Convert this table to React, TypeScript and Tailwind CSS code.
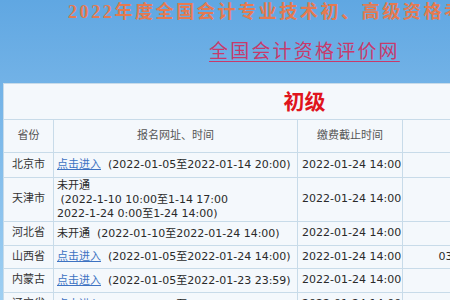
import React from 'react';

const cjk = '"DejaVu Sans", "Noto Sans CJK SC", sans-serif';

type Row = {
    province: string;
    open: boolean;
    lines: string[];
    deadline: string;
    phone?: string;
    h: string;
};

const rows: Row[] = [
    { province: '北京市', open: true, lines: ['\u00a0\u00a0(2022-01-05至2022-01-14 20:00)'], deadline: '2022-01-24 14:00', h: 'h-[25px]' },
    {
        province: '天津市',
        open: false,
        lines: ['未开通', '\u00a0(2022-1-10 10:00至1-14 17:00', '2022-1-24 0:00至1-24 14:00)'],
        deadline: '2022-01-24 14:00',
        h: 'h-[44px]'
    },
    { province: '河北省', open: false, lines: ['未开通\u00a0\u00a0(2022-01-10至2022-01-24 14:00)'], deadline: '2022-01-24 14:00', h: 'h-[24px]' },
    { province: '山西省', open: true, lines: ['\u00a0\u00a0(2022-01-05至2022-01-24 14:00)'], deadline: '2022-01-24 14:00', phone: '0351', h: 'h-[23px]' },
    { province: '内蒙古', open: true, lines: ['\u00a0\u00a0(2022-01-05至2022-01-23 23:59)'], deadline: '2022-01-24 14:00', h: 'h-[24px]' },
    { province: '辽宁省', open: true, lines: ['\u00a0\u00a0(2022-01-05至2022-01-24 14:00)'], deadline: '2022-01-24 14:00', h: 'h-[24px]' }
];

const cell = 'border border-[#c8dbe9]';

export default function App() {
    return (
        <div className="relative h-[300px] w-[450px] overflow-hidden bg-gradient-to-b from-[#60a7e2] to-[#9fcff2]">
            <div
                className="whitespace-nowrap pl-[68px] pt-[1px] text-[18px] font-bold leading-[22px] tracking-[2.6px] text-[#e57a50]"
                style={{ fontFamily: '"Liberation Serif", "Noto Sans CJK SC", serif' }}
            >
                2022年度全国会计专业技术初、高级资格考试报名时间
            </div>
            <div className="flex h-[60px] items-start pl-[209px] pt-[15px]">
                <a
                    href="#"
                    className="whitespace-nowrap text-[19px] leading-[24px] tracking-[2.2px] text-[#c83a6c] underline decoration-1 underline-offset-[3px]"
                    style={{ fontFamily: '"Noto Sans CJK SC", sans-serif' }}
                >
                    全国会计资格评价网
                </a>
            </div>
            <table
                className="ml-[3px] w-[602px] table-fixed border-collapse bg-[#f4f8fc] text-[11px] text-[#2a2a2a]"
                style={{ fontFamily: cjk }}
            >
                <colgroup>
                    <col className="w-[50px]" />
                    <col className="w-[244px]" />
                    <col className="w-[105px]" />
                    <col className="w-[100px]" />
                    <col className="w-[103px]" />
                </colgroup>
                <tbody>
                    <tr className="h-[36px]">
                        <td colSpan={5} className={`${cell} text-center`}>
                            <span
                                className="text-[21px] font-bold leading-[24px] text-[#e0141c]"
                                style={{ fontFamily: '"Noto Sans CJK SC", sans-serif' }}
                            >
                                初级
                            </span>
                        </td>
                    </tr>
                    <tr className="h-[33px] text-[#555]">
                        <td className={`${cell} text-center`}>省份</td>
                        <td className={`${cell} text-center`}>报名网址、时间</td>
                        <td className={`${cell} text-center`}>缴费截止时间</td>
                        <td className={cell}></td>
                        <td className={cell}></td>
                    </tr>
                    {rows.map((r) => (
                        <tr key={r.province} className={r.h}>
                            <td className={`${cell} text-center text-[#333]`}>{r.province}</td>
                            <td className={`${cell} whitespace-nowrap px-[3px] leading-[14px]`}>
                                {r.open ? (
                                    <>
                                        <a href="#" className="text-[#3d72c2] underline">
                                            点击进入
                                        </a>
                                        {r.lines[0]}
                                    </>
                                ) : (
                                    r.lines.map((l, i) => <div key={i}>{l}</div>)
                                )}
                            </td>
                            <td className={`${cell} whitespace-nowrap px-[4px]`}>{r.deadline}</td>
                            <td className={`${cell} text-center`}>{r.phone ?? '/'}</td>
                            <td className={cell}></td>
                        </tr>
                    ))}
                </tbody>
            </table>
        </div>
    );
}
